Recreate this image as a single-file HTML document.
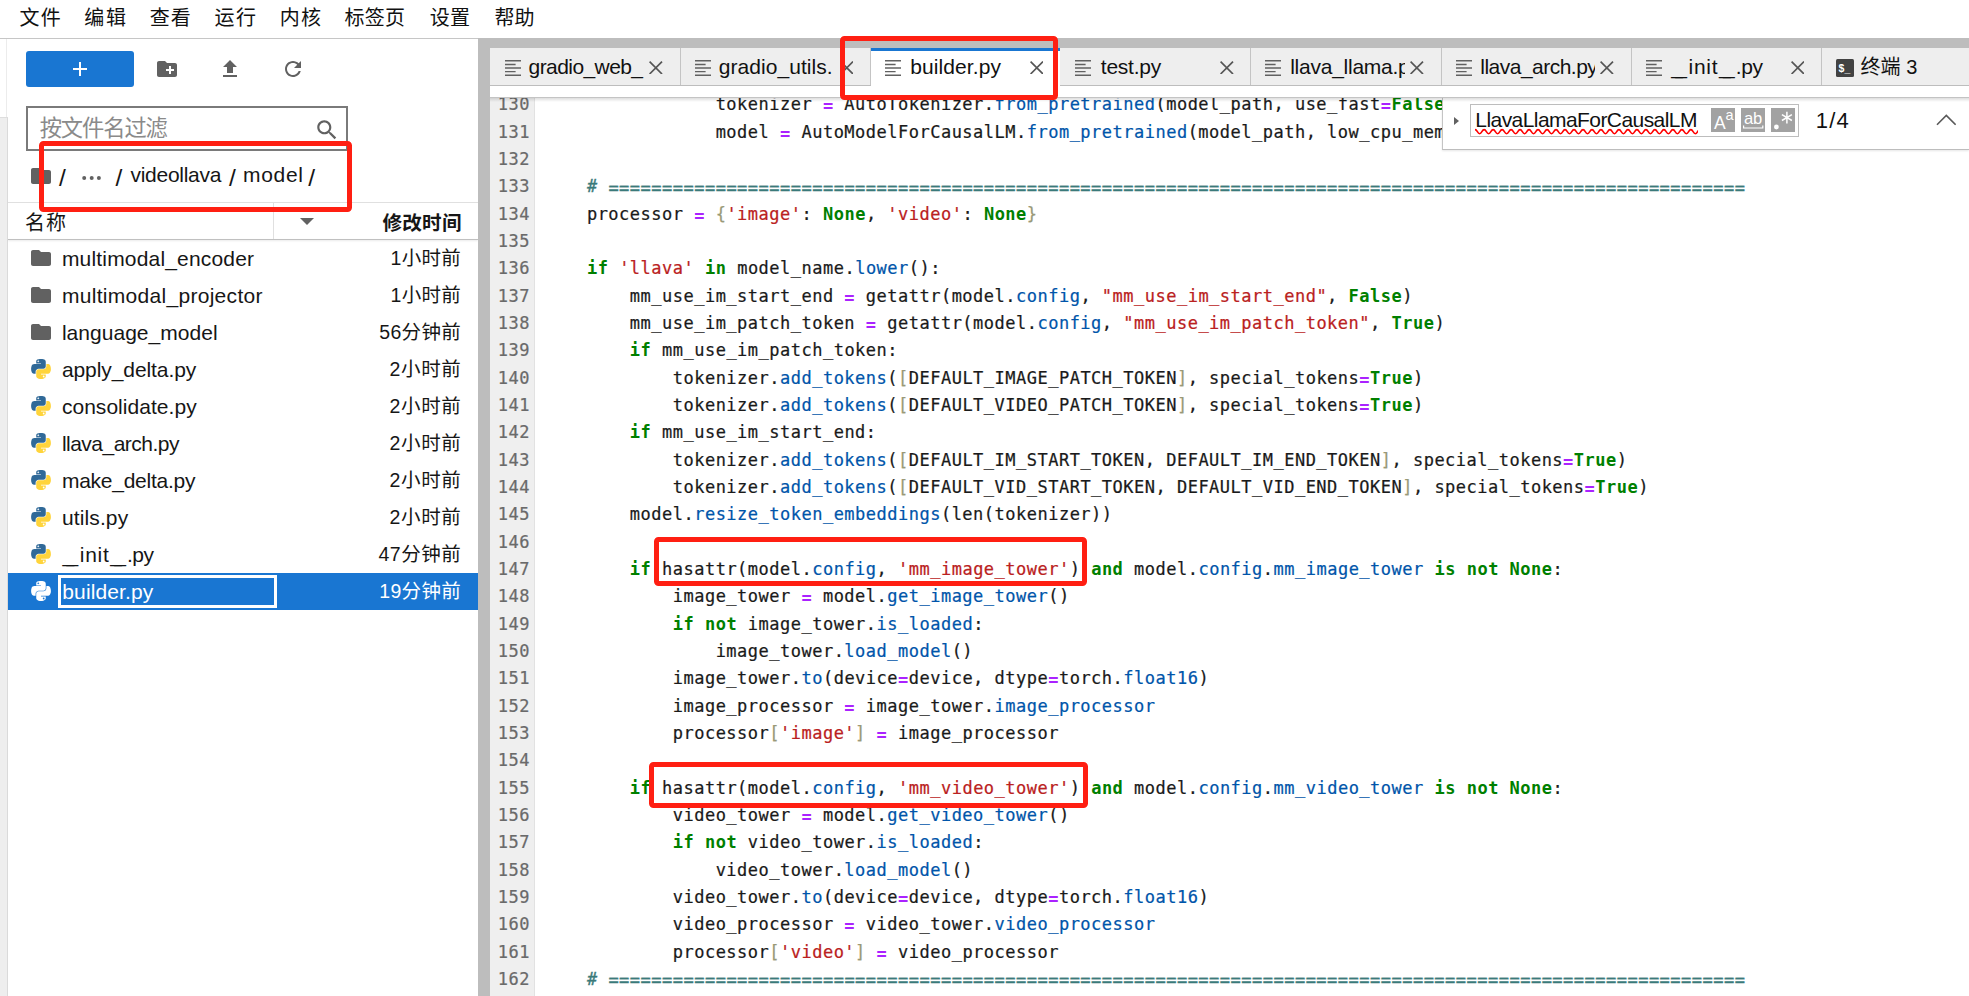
<!DOCTYPE html>
<html lang="zh-CN">
<head>
<meta charset="utf-8">
<title>JupyterLab</title>
<style>
*{box-sizing:border-box;margin:0;padding:0}
html,body{width:1969px;height:996px;overflow:hidden;background:#fff}
body{position:relative;font-family:"Liberation Sans","Noto Sans CJK SC",sans-serif;font-size:21px;color:#161616}
.abs{position:absolute}
.t{position:absolute;line-height:40px;white-space:pre}
#menuline{position:absolute;left:0;top:38px;width:478px;height:1px;background:#c6c6c6}
#strip{position:absolute;left:0;top:117px;width:8px;height:879px;background:#eeeeee;border-top:1px solid #dedede;border-right:1px solid #dadada}
#stripline{position:absolute;left:6px;top:39px;width:1px;height:78px;background:#ececec}
#newbtn{position:absolute;left:26px;top:51px;width:108px;height:36px;background:#1976d2;border-radius:3px}
#newbtn:before{content:"";position:absolute;left:47px;top:17px;width:14px;height:2px;background:#fff}
#newbtn:after{content:"";position:absolute;left:53px;top:11px;width:2px;height:14px;background:#fff}
#filter{position:absolute;left:26px;top:106px;width:322px;height:45px;border:2px solid #7a7a7a;background:#fff}
#hdrtop{position:absolute;left:8px;top:202px;width:470px;height:1px;background:#e0e0e0}
#hdrbot{position:absolute;left:8px;top:239px;width:470px;height:1px;background:#c0c0c0;box-shadow:0 1px 2px rgba(0,0,0,.12)}
#hdrdv{position:absolute;left:273px;top:203px;width:1px;height:36px;background:#e0e0e0}
#dockbg{position:absolute;left:478px;top:38px;width:1491px;height:958px;background:#bdbdbd}
#tabbar{position:absolute;left:490px;top:48px;width:1479px;height:38px;background:#eeeeee;border-bottom:1px solid #bdbdbd}
#tbar{position:absolute;left:490px;top:86px;width:1479px;height:12px;background:#fff;border-bottom:1px solid #c4c4c4}
#ed{position:absolute;left:490px;top:98px;width:1479px;height:898px;background:#fff;overflow:hidden}
#edsh{position:absolute;left:490px;top:98px;width:1479px;height:4px;background:linear-gradient(rgba(0,0,0,.13),rgba(0,0,0,0))}
#gut{position:absolute;left:0;top:0;width:45px;height:898px;background:#efefef;border-right:1px solid #e2e2e2}
#lines{position:absolute;left:0;top:-6.6px;width:1479px;font-family:"DejaVu Sans Mono","Liberation Mono",monospace;font-size:17px;letter-spacing:0.492px;color:#1a1a1a;-webkit-text-stroke:0.22px}
.ln{position:relative;height:27.33px;line-height:27.33px;white-space:pre}
.no{position:absolute;left:0;width:40px;text-align:right;color:#6a6a6a}
.tx{position:absolute;left:54px}
.k{color:#008000;font-weight:bold;-webkit-text-stroke:0}
.o{color:#aa22ff;font-weight:bold;position:relative;top:2px;-webkit-text-stroke:0}
.s{color:#ba2121}
.p{color:#0055aa}
.c{color:#3a7a7a;font-style:italic;-webkit-text-stroke:0.35px}
.e{position:relative;top:1.5px;-webkit-text-stroke:0.4px #3a7a7a}
.b{color:#999977}
#find{position:absolute;left:1442px;top:98px;width:527px;height:52px;background:#fff;border-left:1px solid #c4c4c4;border-bottom:1px solid #bdbdbd;box-shadow:0 1px 2px rgba(0,0,0,.1)}
#finp{position:absolute;left:1470px;top:104px;width:329px;height:33px;border:1px solid #bdbdbd;background:#fff}
.fb{position:absolute;top:108px;width:24px;height:24px;background:#a2a2a2}
.red{position:absolute;border:5px solid #ff1f12;border-radius:4.5px}
</style>
</head>
<body>
<div id="menuline"></div>
<div id="strip"></div><div id="stripline"></div>
<div id="newbtn"></div>
<svg class="abs" style="left:155px;top:57px;width:24px;height:24px" viewBox="0 0 24 24"><path fill="#616161" d="M20 6h-8l-2-2H4c-1.11 0-1.99.89-1.99 2L2 18c0 1.11.89 2 2 2h16c1.11 0 2-.89 2-2V8c0-1.11-.89-2-2-2zm-1 8h-3v3h-2v-3h-3v-2h3V9h2v3h3v2z"/></svg>
<svg class="abs" style="left:218px;top:57px;width:24px;height:24px" viewBox="0 0 24 24"><path fill="#616161" d="M9 16h6v-6h4l-7-7-7 7h4zm-4 2h14v2H5z"/></svg>
<svg class="abs" style="left:281px;top:57px;width:24px;height:24px" viewBox="0 0 24 24"><path fill="#616161" d="M17.65 6.35C16.2 4.9 14.21 4 12 4c-4.42 0-7.99 3.58-7.99 8s3.57 8 7.99 8c3.73 0 6.84-2.55 7.73-6h-2.08c-.82 2.33-3.04 4-5.65 4-3.31 0-6-2.69-6-6s2.69-6 6-6c1.66 0 3.14.69 4.22 1.78L13 11h7V4l-2.35 2.35z"/></svg>
<div id="filter"></div>
<svg class="abs" style="left:314.1px;top:117.4px;width:26px;height:26px" viewBox="0 0 24 24"><path fill="#616161" d="M15.5 14h-.79l-.28-.27C15.41 12.59 16 11.11 16 9.5 16 5.91 13.09 3 9.5 3S3 5.91 3 9.5 5.91 16 9.5 16c1.61 0 3.09-.59 4.23-1.57l.27.28v.79l5 4.99L20.49 19l-4.99-5zm-6 0C7.01 14 5 11.99 5 9.5S7.01 5 9.5 5 14 7.01 14 9.5 11.99 14 9.5 14z"/></svg>
<svg class="abs" style="left:29px;top:164.3px;width:24px;height:24px" viewBox="0 0 24 24"><path fill="#616161" d="M10 4H4c-1.1 0-1.99.9-1.99 2L2 18c0 1.1.9 2 2 2h16c1.1 0 2-.9 2-2V8c0-1.1-.9-2-2-2h-8l-2-2z"/></svg>
<svg class="abs" style="left:80px;top:174px;width:24px;height:8px" viewBox="0 0 24 8"><g fill="#616161"><circle cx="4.2" cy="4" r="2"/><circle cx="11.7" cy="4" r="2"/><circle cx="18.9" cy="4" r="2"/></g></svg>
<div id="hdrtop"></div><div id="hdrbot"></div><div id="hdrdv"></div>
<svg class="abs" style="left:300px;top:218px;width:14px;height:7px" viewBox="0 0 14 7"><path fill="#616161" d="M0 0h14L7 7z"/></svg>
<svg class="abs" style="left:29px;top:246.3px;width:24px;height:24px" viewBox="0 0 24 24"><path fill="#616161" d="M10 4H4c-1.1 0-1.99.9-1.99 2L2 18c0 1.1.9 2 2 2h16c1.1 0 2-.9 2-2V8c0-1.1-.9-2-2-2h-8l-2-2z"/></svg>
<svg class="abs" style="left:29px;top:283.3px;width:24px;height:24px" viewBox="0 0 24 24"><path fill="#616161" d="M10 4H4c-1.1 0-1.99.9-1.99 2L2 18c0 1.1.9 2 2 2h16c1.1 0 2-.9 2-2V8c0-1.1-.9-2-2-2h-8l-2-2z"/></svg>
<svg class="abs" style="left:29px;top:320.3px;width:24px;height:24px" viewBox="0 0 24 24"><path fill="#616161" d="M10 4H4c-1.1 0-1.99.9-1.99 2L2 18c0 1.1.9 2 2 2h16c1.1 0 2-.9 2-2V8c0-1.1-.9-2-2-2h-8l-2-2z"/></svg>
<svg class="abs" style="left:31px;top:359.2px;width:20px;height:20px" viewBox="0 0 111.16 112.39"><path fill="#306998" d="M54.92 0c-4.58.02-8.96.41-12.81 1.1C30.76 3.1 28.7 7.29 28.7 15.02v10.2h26.81v3.4H18.64c-7.79 0-14.61 4.68-16.75 13.59-2.46 10.21-2.57 16.59 0 27.25 1.91 7.94 6.46 13.59 14.25 13.59h9.22V70.81c0-8.85 7.66-16.66 16.75-16.66h26.78c7.45 0 13.41-6.14 13.41-13.62V15.02c0-7.27-6.13-12.72-13.41-13.94C64.28.32 59.5-.02 54.92 0zM40.42 8.21c2.77 0 5.03 2.3 5.03 5.12 0 2.82-2.26 5.1-5.03 5.1-2.78 0-5.03-2.28-5.03-5.1 0-2.83 2.25-5.12 5.03-5.12z"/><path fill="#ffd43b" d="M85.64 28.66v11.91c0 9.23-7.83 17-16.75 17H42.11c-7.34 0-13.41 6.28-13.41 13.62v25.53c0 7.27 6.32 11.54 13.41 13.62 8.49 2.5 16.63 2.95 26.78 0 6.75-1.95 13.41-5.89 13.41-13.62V86.5H55.52v-3.4h40.19c7.79 0 10.7-5.44 13.41-13.59 2.8-8.4 2.68-16.47 0-27.25-1.93-7.76-5.6-13.59-13.41-13.59H85.64zM70.58 93.31c2.78 0 5.03 2.28 5.03 5.1 0 2.83-2.25 5.12-5.03 5.12-2.77 0-5.03-2.3-5.03-5.12 0-2.82 2.26-5.1 5.03-5.1z"/></svg>
<svg class="abs" style="left:31px;top:396.2px;width:20px;height:20px" viewBox="0 0 111.16 112.39"><path fill="#306998" d="M54.92 0c-4.58.02-8.96.41-12.81 1.1C30.76 3.1 28.7 7.29 28.7 15.02v10.2h26.81v3.4H18.64c-7.79 0-14.61 4.68-16.75 13.59-2.46 10.21-2.57 16.59 0 27.25 1.91 7.94 6.46 13.59 14.25 13.59h9.22V70.81c0-8.85 7.66-16.66 16.75-16.66h26.78c7.45 0 13.41-6.14 13.41-13.62V15.02c0-7.27-6.13-12.72-13.41-13.94C64.28.32 59.5-.02 54.92 0zM40.42 8.21c2.77 0 5.03 2.3 5.03 5.12 0 2.82-2.26 5.1-5.03 5.1-2.78 0-5.03-2.28-5.03-5.1 0-2.83 2.25-5.12 5.03-5.12z"/><path fill="#ffd43b" d="M85.64 28.66v11.91c0 9.23-7.83 17-16.75 17H42.11c-7.34 0-13.41 6.28-13.41 13.62v25.53c0 7.27 6.32 11.54 13.41 13.62 8.49 2.5 16.63 2.95 26.78 0 6.75-1.95 13.41-5.89 13.41-13.62V86.5H55.52v-3.4h40.19c7.79 0 10.7-5.44 13.41-13.59 2.8-8.4 2.68-16.47 0-27.25-1.93-7.76-5.6-13.59-13.41-13.59H85.64zM70.58 93.31c2.78 0 5.03 2.28 5.03 5.1 0 2.83-2.25 5.12-5.03 5.12-2.77 0-5.03-2.3-5.03-5.12 0-2.82 2.26-5.1 5.03-5.1z"/></svg>
<svg class="abs" style="left:31px;top:433.2px;width:20px;height:20px" viewBox="0 0 111.16 112.39"><path fill="#306998" d="M54.92 0c-4.58.02-8.96.41-12.81 1.1C30.76 3.1 28.7 7.29 28.7 15.02v10.2h26.81v3.4H18.64c-7.79 0-14.61 4.68-16.75 13.59-2.46 10.21-2.57 16.59 0 27.25 1.91 7.94 6.46 13.59 14.25 13.59h9.22V70.81c0-8.85 7.66-16.66 16.75-16.66h26.78c7.45 0 13.41-6.14 13.41-13.62V15.02c0-7.27-6.13-12.72-13.41-13.94C64.28.32 59.5-.02 54.92 0zM40.42 8.21c2.77 0 5.03 2.3 5.03 5.12 0 2.82-2.26 5.1-5.03 5.1-2.78 0-5.03-2.28-5.03-5.1 0-2.83 2.25-5.12 5.03-5.12z"/><path fill="#ffd43b" d="M85.64 28.66v11.91c0 9.23-7.83 17-16.75 17H42.11c-7.34 0-13.41 6.28-13.41 13.62v25.53c0 7.27 6.32 11.54 13.41 13.62 8.49 2.5 16.63 2.95 26.78 0 6.75-1.95 13.41-5.89 13.41-13.62V86.5H55.52v-3.4h40.19c7.79 0 10.7-5.44 13.41-13.59 2.8-8.4 2.68-16.47 0-27.25-1.93-7.76-5.6-13.59-13.41-13.59H85.64zM70.58 93.31c2.78 0 5.03 2.28 5.03 5.1 0 2.83-2.25 5.12-5.03 5.12-2.77 0-5.03-2.3-5.03-5.12 0-2.82 2.26-5.1 5.03-5.1z"/></svg>
<svg class="abs" style="left:31px;top:470.2px;width:20px;height:20px" viewBox="0 0 111.16 112.39"><path fill="#306998" d="M54.92 0c-4.58.02-8.96.41-12.81 1.1C30.76 3.1 28.7 7.29 28.7 15.02v10.2h26.81v3.4H18.64c-7.79 0-14.61 4.68-16.75 13.59-2.46 10.21-2.57 16.59 0 27.25 1.91 7.94 6.46 13.59 14.25 13.59h9.22V70.81c0-8.85 7.66-16.66 16.75-16.66h26.78c7.45 0 13.41-6.14 13.41-13.62V15.02c0-7.27-6.13-12.72-13.41-13.94C64.28.32 59.5-.02 54.92 0zM40.42 8.21c2.77 0 5.03 2.3 5.03 5.12 0 2.82-2.26 5.1-5.03 5.1-2.78 0-5.03-2.28-5.03-5.1 0-2.83 2.25-5.12 5.03-5.12z"/><path fill="#ffd43b" d="M85.64 28.66v11.91c0 9.23-7.83 17-16.75 17H42.11c-7.34 0-13.41 6.28-13.41 13.62v25.53c0 7.27 6.32 11.54 13.41 13.62 8.49 2.5 16.63 2.95 26.78 0 6.75-1.95 13.41-5.89 13.41-13.62V86.5H55.52v-3.4h40.19c7.79 0 10.7-5.44 13.41-13.59 2.8-8.4 2.68-16.47 0-27.25-1.93-7.76-5.6-13.59-13.41-13.59H85.64zM70.58 93.31c2.78 0 5.03 2.28 5.03 5.1 0 2.83-2.25 5.12-5.03 5.12-2.77 0-5.03-2.3-5.03-5.12 0-2.82 2.26-5.1 5.03-5.1z"/></svg>
<svg class="abs" style="left:31px;top:507.2px;width:20px;height:20px" viewBox="0 0 111.16 112.39"><path fill="#306998" d="M54.92 0c-4.58.02-8.96.41-12.81 1.1C30.76 3.1 28.7 7.29 28.7 15.02v10.2h26.81v3.4H18.64c-7.79 0-14.61 4.68-16.75 13.59-2.46 10.21-2.57 16.59 0 27.25 1.91 7.94 6.46 13.59 14.25 13.59h9.22V70.81c0-8.85 7.66-16.66 16.75-16.66h26.78c7.45 0 13.41-6.14 13.41-13.62V15.02c0-7.27-6.13-12.72-13.41-13.94C64.28.32 59.5-.02 54.92 0zM40.42 8.21c2.77 0 5.03 2.3 5.03 5.12 0 2.82-2.26 5.1-5.03 5.1-2.78 0-5.03-2.28-5.03-5.1 0-2.83 2.25-5.12 5.03-5.12z"/><path fill="#ffd43b" d="M85.64 28.66v11.91c0 9.23-7.83 17-16.75 17H42.11c-7.34 0-13.41 6.28-13.41 13.62v25.53c0 7.27 6.32 11.54 13.41 13.62 8.49 2.5 16.63 2.95 26.78 0 6.75-1.95 13.41-5.89 13.41-13.62V86.5H55.52v-3.4h40.19c7.79 0 10.7-5.44 13.41-13.59 2.8-8.4 2.68-16.47 0-27.25-1.93-7.76-5.6-13.59-13.41-13.59H85.64zM70.58 93.31c2.78 0 5.03 2.28 5.03 5.1 0 2.83-2.25 5.12-5.03 5.12-2.77 0-5.03-2.3-5.03-5.12 0-2.82 2.26-5.1 5.03-5.1z"/></svg>
<svg class="abs" style="left:31px;top:544.2px;width:20px;height:20px" viewBox="0 0 111.16 112.39"><path fill="#306998" d="M54.92 0c-4.58.02-8.96.41-12.81 1.1C30.76 3.1 28.7 7.29 28.7 15.02v10.2h26.81v3.4H18.64c-7.79 0-14.61 4.68-16.75 13.59-2.46 10.21-2.57 16.59 0 27.25 1.91 7.94 6.46 13.59 14.25 13.59h9.22V70.81c0-8.85 7.66-16.66 16.75-16.66h26.78c7.45 0 13.41-6.14 13.41-13.62V15.02c0-7.27-6.13-12.72-13.41-13.94C64.28.32 59.5-.02 54.92 0zM40.42 8.21c2.77 0 5.03 2.3 5.03 5.12 0 2.82-2.26 5.1-5.03 5.1-2.78 0-5.03-2.28-5.03-5.1 0-2.83 2.25-5.12 5.03-5.12z"/><path fill="#ffd43b" d="M85.64 28.66v11.91c0 9.23-7.83 17-16.75 17H42.11c-7.34 0-13.41 6.28-13.41 13.62v25.53c0 7.27 6.32 11.54 13.41 13.62 8.49 2.5 16.63 2.95 26.78 0 6.75-1.95 13.41-5.89 13.41-13.62V86.5H55.52v-3.4h40.19c7.79 0 10.7-5.44 13.41-13.59 2.8-8.4 2.68-16.47 0-27.25-1.93-7.76-5.6-13.59-13.41-13.59H85.64zM70.58 93.31c2.78 0 5.03 2.28 5.03 5.1 0 2.83-2.25 5.12-5.03 5.12-2.77 0-5.03-2.3-5.03-5.12 0-2.82 2.26-5.1 5.03-5.1z"/></svg>
<div class="abs" style="left:8px;top:572.5px;width:470px;height:37px;background:#1976d2"></div>
<div class="abs" style="left:58px;top:575px;width:219px;height:33px;border:3px solid #fff"></div>
<svg class="abs" style="left:31px;top:581.2px;width:20px;height:20px" viewBox="0 0 111.16 112.39"><path fill="#ffffff" d="M54.92 0c-4.58.02-8.96.41-12.81 1.1C30.76 3.1 28.7 7.29 28.7 15.02v10.2h26.81v3.4H18.64c-7.79 0-14.61 4.68-16.75 13.59-2.46 10.21-2.57 16.59 0 27.25 1.91 7.94 6.46 13.59 14.25 13.59h9.22V70.81c0-8.85 7.66-16.66 16.75-16.66h26.78c7.45 0 13.41-6.14 13.41-13.62V15.02c0-7.27-6.13-12.72-13.41-13.94C64.28.32 59.5-.02 54.92 0zM40.42 8.21c2.77 0 5.03 2.3 5.03 5.12 0 2.82-2.26 5.1-5.03 5.1-2.78 0-5.03-2.28-5.03-5.1 0-2.83 2.25-5.12 5.03-5.12z"/><path fill="#ffffff" d="M85.64 28.66v11.91c0 9.23-7.83 17-16.75 17H42.11c-7.34 0-13.41 6.28-13.41 13.62v25.53c0 7.27 6.32 11.54 13.41 13.62 8.49 2.5 16.63 2.95 26.78 0 6.75-1.95 13.41-5.89 13.41-13.62V86.5H55.52v-3.4h40.19c7.79 0 10.7-5.44 13.41-13.59 2.8-8.4 2.68-16.47 0-27.25-1.93-7.76-5.6-13.59-13.41-13.59H85.64zM70.58 93.31c2.78 0 5.03 2.28 5.03 5.1 0 2.83-2.25 5.12-5.03 5.12-2.77 0-5.03-2.3-5.03-5.12 0-2.82 2.26-5.1 5.03-5.1z"/></svg>
<div id="dockbg"></div>
<div id="tabbar"></div>
<div class="abs" style="left:679.7px;top:48px;width:1px;height:37px;background:#c4c4c4"></div>
<svg class="abs" style="left:504.6px;top:59.5px;width:16px;height:16px" viewBox="0 0 16 16"><path fill="none" stroke="#616161" stroke-width="1.45" d="M0 .8h16M0 4.4h10.6M0 8h16M0 11.6h10.6M0 15.2h16"/></svg>
<svg class="abs" style="left:649.4px;top:60.8px;width:13.6px;height:13.6px" viewBox="0 0 14 14"><path fill="none" stroke="#555" stroke-width="1.75" d="M.6.6l12.8 12.8M13.4.6L.6 13.4"/></svg>
<div class="abs" style="left:869.9px;top:48px;width:1px;height:37px;background:#c4c4c4"></div>
<svg class="abs" style="left:694.8px;top:59.5px;width:16px;height:16px" viewBox="0 0 16 16"><path fill="none" stroke="#616161" stroke-width="1.45" d="M0 .8h16M0 4.4h10.6M0 8h16M0 11.6h10.6M0 15.2h16"/></svg>
<svg class="abs" style="left:839.6px;top:60.8px;width:13.6px;height:13.6px" viewBox="0 0 14 14"><path fill="none" stroke="#555" stroke-width="1.75" d="M.6.6l12.8 12.8M13.4.6L.6 13.4"/></svg>
<div class="abs" style="left:870.9px;top:48px;width:189.0px;height:38px;background:#fff;border-top:3px solid #1976d2"></div>
<svg class="abs" style="left:885.0px;top:59.5px;width:16px;height:16px" viewBox="0 0 16 16"><path fill="none" stroke="#616161" stroke-width="1.45" d="M0 .8h16M0 4.4h10.6M0 8h16M0 11.6h10.6M0 15.2h16"/></svg>
<svg class="abs" style="left:1029.8px;top:60.8px;width:13.6px;height:13.6px" viewBox="0 0 14 14"><path fill="none" stroke="#555" stroke-width="1.75" d="M.6.6l12.8 12.8M13.4.6L.6 13.4"/></svg>
<div class="abs" style="left:1250.3px;top:48px;width:1px;height:37px;background:#c4c4c4"></div>
<svg class="abs" style="left:1075.2px;top:59.5px;width:16px;height:16px" viewBox="0 0 16 16"><path fill="none" stroke="#616161" stroke-width="1.45" d="M0 .8h16M0 4.4h10.6M0 8h16M0 11.6h10.6M0 15.2h16"/></svg>
<svg class="abs" style="left:1220.0px;top:60.8px;width:13.6px;height:13.6px" viewBox="0 0 14 14"><path fill="none" stroke="#555" stroke-width="1.75" d="M.6.6l12.8 12.8M13.4.6L.6 13.4"/></svg>
<div class="abs" style="left:1440.5px;top:48px;width:1px;height:37px;background:#c4c4c4"></div>
<svg class="abs" style="left:1265.4px;top:59.5px;width:16px;height:16px" viewBox="0 0 16 16"><path fill="none" stroke="#616161" stroke-width="1.45" d="M0 .8h16M0 4.4h10.6M0 8h16M0 11.6h10.6M0 15.2h16"/></svg>
<svg class="abs" style="left:1410.2px;top:60.8px;width:13.6px;height:13.6px" viewBox="0 0 14 14"><path fill="none" stroke="#555" stroke-width="1.75" d="M.6.6l12.8 12.8M13.4.6L.6 13.4"/></svg>
<div class="abs" style="left:1630.7px;top:48px;width:1px;height:37px;background:#c4c4c4"></div>
<svg class="abs" style="left:1455.6px;top:59.5px;width:16px;height:16px" viewBox="0 0 16 16"><path fill="none" stroke="#616161" stroke-width="1.45" d="M0 .8h16M0 4.4h10.6M0 8h16M0 11.6h10.6M0 15.2h16"/></svg>
<svg class="abs" style="left:1600.4px;top:60.8px;width:13.6px;height:13.6px" viewBox="0 0 14 14"><path fill="none" stroke="#555" stroke-width="1.75" d="M.6.6l12.8 12.8M13.4.6L.6 13.4"/></svg>
<div class="abs" style="left:1820.9px;top:48px;width:1px;height:37px;background:#c4c4c4"></div>
<svg class="abs" style="left:1645.8px;top:59.5px;width:16px;height:16px" viewBox="0 0 16 16"><path fill="none" stroke="#616161" stroke-width="1.45" d="M0 .8h16M0 4.4h10.6M0 8h16M0 11.6h10.6M0 15.2h16"/></svg>
<svg class="abs" style="left:1790.6px;top:60.8px;width:13.6px;height:13.6px" viewBox="0 0 14 14"><path fill="none" stroke="#555" stroke-width="1.75" d="M.6.6l12.8 12.8M13.4.6L.6 13.4"/></svg>
<svg class="abs" style="left:1835.5px;top:58.6px;width:18px;height:18px" viewBox="0 0 18 18"><rect width="18" height="18" rx="1.5" fill="#424242"/><text x="2.6" y="13" font-family="Liberation Sans, sans-serif" font-size="10.5" font-weight="bold" fill="#fff">$_</text></svg>
<div id="tbar"></div>
<div id="ed">
<div id="gut"></div>
<div id="lines">
<div class="ln"><span class="no">130</span><span class="tx">                tokenizer <span class="o">=</span> AutoTokenizer.<span class="p">from_pretrained</span>(model_path, use_fast<span class="o">=</span><span class="k">False</span></span></div>
<div class="ln"><span class="no">131</span><span class="tx">                model <span class="o">=</span> AutoModelForCausalLM.<span class="p">from_pretrained</span>(model_path, low_cpu_mem</span></div>
<div class="ln"><span class="no">132</span><span class="tx"></span></div>
<div class="ln"><span class="no">133</span><span class="tx">    <span class="c"># <span class="e">==========================================================================================================</span></span></span></div>
<div class="ln"><span class="no">134</span><span class="tx">    processor <span class="o">=</span> <span class="b">{</span><span class="s">'image'</span>: <span class="k">None</span>, <span class="s">'video'</span>: <span class="k">None</span><span class="b">}</span></span></div>
<div class="ln"><span class="no">135</span><span class="tx"></span></div>
<div class="ln"><span class="no">136</span><span class="tx">    <span class="k">if</span> <span class="s">'llava'</span> <span class="k">in</span> model_name.<span class="p">lower</span>():</span></div>
<div class="ln"><span class="no">137</span><span class="tx">        mm_use_im_start_end <span class="o">=</span> getattr(model.<span class="p">config</span>, <span class="s">"mm_use_im_start_end"</span>, <span class="k">False</span>)</span></div>
<div class="ln"><span class="no">138</span><span class="tx">        mm_use_im_patch_token <span class="o">=</span> getattr(model.<span class="p">config</span>, <span class="s">"mm_use_im_patch_token"</span>, <span class="k">True</span>)</span></div>
<div class="ln"><span class="no">139</span><span class="tx">        <span class="k">if</span> mm_use_im_patch_token:</span></div>
<div class="ln"><span class="no">140</span><span class="tx">            tokenizer.<span class="p">add_tokens</span>(<span class="b">[</span>DEFAULT_IMAGE_PATCH_TOKEN<span class="b">]</span>, special_tokens<span class="o">=</span><span class="k">True</span>)</span></div>
<div class="ln"><span class="no">141</span><span class="tx">            tokenizer.<span class="p">add_tokens</span>(<span class="b">[</span>DEFAULT_VIDEO_PATCH_TOKEN<span class="b">]</span>, special_tokens<span class="o">=</span><span class="k">True</span>)</span></div>
<div class="ln"><span class="no">142</span><span class="tx">        <span class="k">if</span> mm_use_im_start_end:</span></div>
<div class="ln"><span class="no">143</span><span class="tx">            tokenizer.<span class="p">add_tokens</span>(<span class="b">[</span>DEFAULT_IM_START_TOKEN, DEFAULT_IM_END_TOKEN<span class="b">]</span>, special_tokens<span class="o">=</span><span class="k">True</span>)</span></div>
<div class="ln"><span class="no">144</span><span class="tx">            tokenizer.<span class="p">add_tokens</span>(<span class="b">[</span>DEFAULT_VID_START_TOKEN, DEFAULT_VID_END_TOKEN<span class="b">]</span>, special_tokens<span class="o">=</span><span class="k">True</span>)</span></div>
<div class="ln"><span class="no">145</span><span class="tx">        model.<span class="p">resize_token_embeddings</span>(len(tokenizer))</span></div>
<div class="ln"><span class="no">146</span><span class="tx"></span></div>
<div class="ln"><span class="no">147</span><span class="tx">        <span class="k">if</span> hasattr(model.<span class="p">config</span>, <span class="s">'mm_image_tower'</span>) <span class="k">and</span> model.<span class="p">config</span>.<span class="p">mm_image_tower</span> <span class="k">is</span> <span class="k">not</span> <span class="k">None</span>:</span></div>
<div class="ln"><span class="no">148</span><span class="tx">            image_tower <span class="o">=</span> model.<span class="p">get_image_tower</span>()</span></div>
<div class="ln"><span class="no">149</span><span class="tx">            <span class="k">if</span> <span class="k">not</span> image_tower.<span class="p">is_loaded</span>:</span></div>
<div class="ln"><span class="no">150</span><span class="tx">                image_tower.<span class="p">load_model</span>()</span></div>
<div class="ln"><span class="no">151</span><span class="tx">            image_tower.<span class="p">to</span>(device<span class="o">=</span>device, dtype<span class="o">=</span>torch.<span class="p">float16</span>)</span></div>
<div class="ln"><span class="no">152</span><span class="tx">            image_processor <span class="o">=</span> image_tower.<span class="p">image_processor</span></span></div>
<div class="ln"><span class="no">153</span><span class="tx">            processor<span class="b">[</span><span class="s">'image'</span><span class="b">]</span> <span class="o">=</span> image_processor</span></div>
<div class="ln"><span class="no">154</span><span class="tx"></span></div>
<div class="ln"><span class="no">155</span><span class="tx">        <span class="k">if</span> hasattr(model.<span class="p">config</span>, <span class="s">'mm_video_tower'</span>) <span class="k">and</span> model.<span class="p">config</span>.<span class="p">mm_video_tower</span> <span class="k">is</span> <span class="k">not</span> <span class="k">None</span>:</span></div>
<div class="ln"><span class="no">156</span><span class="tx">            video_tower <span class="o">=</span> model.<span class="p">get_video_tower</span>()</span></div>
<div class="ln"><span class="no">157</span><span class="tx">            <span class="k">if</span> <span class="k">not</span> video_tower.<span class="p">is_loaded</span>:</span></div>
<div class="ln"><span class="no">158</span><span class="tx">                video_tower.<span class="p">load_model</span>()</span></div>
<div class="ln"><span class="no">159</span><span class="tx">            video_tower.<span class="p">to</span>(device<span class="o">=</span>device, dtype<span class="o">=</span>torch.<span class="p">float16</span>)</span></div>
<div class="ln"><span class="no">160</span><span class="tx">            video_processor <span class="o">=</span> video_tower.<span class="p">video_processor</span></span></div>
<div class="ln"><span class="no">161</span><span class="tx">            processor<span class="b">[</span><span class="s">'video'</span><span class="b">]</span> <span class="o">=</span> video_processor</span></div>
<div class="ln"><span class="no">162</span><span class="tx">    <span class="c"># <span class="e">==========================================================================================================</span></span></span></div>
</div>
</div>
<div id="find"></div>
<div id="edsh"></div>
<svg class="abs" style="left:1453.8px;top:117px;width:5px;height:8px" viewBox="0 0 5 8"><path fill="#616161" d="M0 0l5 4-5 4z"/></svg>
<div id="finp"></div>
<div class="fb" style="left:1711px"><svg class="abs" style="left:0;top:0;width:24px;height:24px" viewBox="0 0 24 24"><text x="2.9" y="21.2" font-family="Liberation Sans, sans-serif" font-size="17.5" fill="#fff">A</text><text x="14.6" y="12" font-family="Liberation Sans, sans-serif" font-size="14.5" fill="#fff">a</text></svg></div>
<div class="fb" style="left:1741px"><svg class="abs" style="left:0;top:0;width:24px;height:24px" viewBox="0 0 24 24"><text x="2.9" y="16.4" font-family="Liberation Sans, sans-serif" font-size="16.6" fill="#fff">ab</text><path d="M2.6 17.4v2.6h19.2v-2.6" fill="none" stroke="#fff" stroke-width="1.2"/></svg></div>
<div class="fb" style="left:1771px"><svg class="abs" style="left:0;top:0;width:24px;height:24px" viewBox="0 0 24 24"><circle cx="5.4" cy="19" r="2.4" fill="#fff"/><path d="M15.9 3.8v11.6M10.9 6.7l10 5.8M20.9 6.7l-10 5.8" fill="none" stroke="#fff" stroke-width="1.5"/></svg></div>
<svg class="abs" style="left:1935.6px;top:114.3px;width:20.6px;height:11.6px" viewBox="0 0 20.6 11.6"><path fill="none" stroke="#5a5a5a" stroke-width="1.6" d="M1 10.8L10.3 1.5l9.3 9.3"/></svg>
<span class="t" style="left:19.60px;top:-1.80px;font-size:20px;letter-spacing:1.1px;color:#111;">文件</span>
<span class="t" style="left:84.30px;top:-1.80px;font-size:20px;letter-spacing:1.6px;color:#111;">编辑</span>
<span class="t" style="left:149.70px;top:-1.80px;font-size:20px;letter-spacing:1.1px;color:#111;">查看</span>
<span class="t" style="left:214.40px;top:-1.80px;font-size:20px;letter-spacing:1.6px;color:#111;">运行</span>
<span class="t" style="left:279.70px;top:-1.80px;font-size:20px;letter-spacing:1.4px;color:#111;">内核</span>
<span class="t" style="left:344.40px;top:-1.80px;font-size:20px;letter-spacing:0.3px;color:#111;">标签页</span>
<span class="t" style="left:429.70px;top:-1.80px;font-size:20px;letter-spacing:0.4px;color:#111;">设置</span>
<span class="t" style="left:494.40px;top:-1.80px;font-size:20px;color:#111;">帮助</span>
<span class="t" style="left:39.70px;top:108.60px;font-size:22.3px;letter-spacing:-1.12px;color:#8a8a8a;">按文件名过滤</span>
<span class="abs" style="left:0;top:0"><span class="t" style="left:58.90px;top:157.80px;font-size:24.5px;">/</span><span class="t" style="left:115.50px;top:157.80px;font-size:24.5px;">/</span><span class="t" style="left:130.50px;top:155.00px;font-size:21px;letter-spacing:-0.278px;">videollava</span><span class="t" style="left:229.00px;top:157.80px;font-size:24.5px;">/</span><span class="t" style="left:243.10px;top:155.00px;font-size:21px;letter-spacing:0.675px;">model</span><span class="t" style="left:308.30px;top:157.80px;font-size:24.5px;">/</span></span>
<span class="t" style="left:25.10px;top:203.30px;font-size:20px;letter-spacing:0.9px;">名称</span>
<span class="t" style="left:382.60px;top:202.60px;font-size:19.6px;letter-spacing:0.167px;font-weight:700;">修改时间</span>
<span class="t" style="left:61.90px;top:238.70px;font-size:21px;letter-spacing:0.182px;">multimodal_encoder</span>
<span class="t" style="left:390.60px;top:238.20px;font-size:19.5px;letter-spacing:0.3px;">1小时前</span>
<span class="t" style="left:61.90px;top:275.70px;font-size:21px;letter-spacing:0.3px;">multimodal_projector</span>
<span class="t" style="left:390.60px;top:275.20px;font-size:19.5px;letter-spacing:0.3px;">1小时前</span>
<span class="t" style="left:61.90px;top:312.70px;font-size:21px;letter-spacing:0.031px;">language_model</span>
<span class="t" style="left:379.30px;top:312.20px;font-size:19.5px;letter-spacing:0.3px;">56分钟前</span>
<span class="t" style="left:61.90px;top:349.70px;font-size:21px;letter-spacing:-0.077px;">apply_delta.py</span>
<span class="t" style="left:389.60px;top:349.20px;font-size:19.5px;letter-spacing:0.633px;">2小时前</span>
<span class="t" style="left:61.90px;top:386.70px;font-size:21px;letter-spacing:0.038px;">consolidate.py</span>
<span class="t" style="left:389.60px;top:386.20px;font-size:19.5px;letter-spacing:0.633px;">2小时前</span>
<span class="t" style="left:61.90px;top:423.70px;font-size:21px;letter-spacing:-0.517px;">llava_arch.py</span>
<span class="t" style="left:389.60px;top:423.20px;font-size:19.5px;letter-spacing:0.633px;">2小时前</span>
<span class="t" style="left:61.90px;top:460.70px;font-size:21px;letter-spacing:-0.25px;">make_delta.py</span>
<span class="t" style="left:389.60px;top:460.20px;font-size:19.5px;letter-spacing:0.633px;">2小时前</span>
<span class="t" style="left:61.90px;top:497.70px;font-size:21px;letter-spacing:0.129px;">utils.py</span>
<span class="t" style="left:389.60px;top:497.20px;font-size:19.5px;letter-spacing:0.633px;">2小时前</span>
<span class="abs" style="left:0;top:0"><span class="t" style="left:62.40px;top:534.70px;font-size:21px;letter-spacing:-7.5px;">__</span><span class="t" style="left:79.80px;top:534.70px;font-size:21px;letter-spacing:0.7px;">init</span><span class="t" style="left:110.20px;top:534.70px;font-size:21px;letter-spacing:-7.7px;">__</span><span class="t" style="left:126.90px;top:534.70px;font-size:21px;letter-spacing:-0.5px;">.py</span></span>
<span class="t" style="left:378.40px;top:534.20px;font-size:19.5px;letter-spacing:0.525px;">47分钟前</span>
<span class="t" style="left:62.30px;top:571.70px;font-size:21px;letter-spacing:0.111px;color:#fff;">builder.py</span>
<span class="t" style="left:379.30px;top:571.20px;font-size:19.5px;letter-spacing:0.3px;color:#fff;">19分钟前</span>
<span class="t" style="left:528.60px;top:47.00px;font-size:21px;letter-spacing:-0.58px;color:#111;">gradio_web_</span>
<span class="t" style="left:718.70px;top:47.00px;font-size:21px;letter-spacing:0.058px;color:#111;">gradio_utils.</span>
<span class="t" style="left:910.20px;top:47.00px;font-size:21px;letter-spacing:0.1px;color:#111;">builder.py</span>
<span class="t" style="left:1100.80px;top:47.00px;font-size:21px;letter-spacing:-0.233px;color:#111;">test.py</span>
<span class="t" style="left:1290.20px;top:47.00px;font-size:21px;letter-spacing:-0.25px;color:#111;">llava_llama.p</span>
<span class="t" style="left:1480.30px;top:47.00px;font-size:21px;letter-spacing:-0.517px;color:#111;">llava_arch.py</span>
<span class="abs" style="left:0;top:0"><span class="t" style="left:1671.20px;top:47.00px;font-size:21px;letter-spacing:-7.5px;color:#111;">__</span><span class="t" style="left:1688.60px;top:47.00px;font-size:21px;letter-spacing:0.7px;color:#111;">init</span><span class="t" style="left:1719.00px;top:47.00px;font-size:21px;letter-spacing:-7.7px;color:#111;">__</span><span class="t" style="left:1735.70px;top:47.00px;font-size:21px;letter-spacing:-0.35px;color:#111;">.py</span></span>
<span class="t" style="left:1860.40px;top:46.60px;font-size:20px;letter-spacing:0.1px;color:#111;">终端 3</span>
<span class="t" style="left:1475.30px;top:100.40px;font-size:21px;letter-spacing:-0.565px;color:#111;">LlavaLlamaForCausalLM</span>
<span class="t" style="left:1815.80px;top:100.80px;font-size:22px;letter-spacing:1.2px;color:#111;">1/4</span>
<svg class="abs" style="left:1475px;top:128.2px;width:222.5px;height:7.4px" viewBox="0 0 222.5 7.4"><path d="M-2.25 3.7 q2.25 -4.10 4.50 0 t4.50 0 t4.50 0 t4.50 0 t4.50 0 t4.50 0 t4.50 0 t4.50 0 t4.50 0 t4.50 0 t4.50 0 t4.50 0 t4.50 0 t4.50 0 t4.50 0 t4.50 0 t4.50 0 t4.50 0 t4.50 0 t4.50 0 t4.50 0 t4.50 0 t4.50 0 t4.50 0 t4.50 0 t4.50 0 t4.50 0 t4.50 0 t4.50 0 t4.50 0 t4.50 0 t4.50 0 t4.50 0 t4.50 0 t4.50 0 t4.50 0 t4.50 0 t4.50 0 t4.50 0 t4.50 0 t4.50 0 t4.50 0 t4.50 0 t4.50 0 t4.50 0 t4.50 0 t4.50 0 t4.50 0 t4.50 0 t4.50 0 t4.50 0 t4.50 0" fill="none" stroke="#ff0000" stroke-width="1.6"/></svg>
<div class="abs" style="left:1405.1px;top:52px;width:4.7px;height:32px;background:#eee"></div>
<div class="abs" style="left:1595.3px;top:52px;width:4.7px;height:32px;background:#eee"></div>
<div class="red" style="left:839.8px;top:35.6px;width:218px;height:64.4px"></div>
<div class="red" style="left:38.8px;top:141.4px;width:312.8px;height:70.7px"></div>
<div class="red" style="left:653.8px;top:537.3px;width:433.5px;height:49.2px"></div>
<div class="red" style="left:648.7px;top:762.3px;width:439.8px;height:45.7px"></div>
</body>
</html>
